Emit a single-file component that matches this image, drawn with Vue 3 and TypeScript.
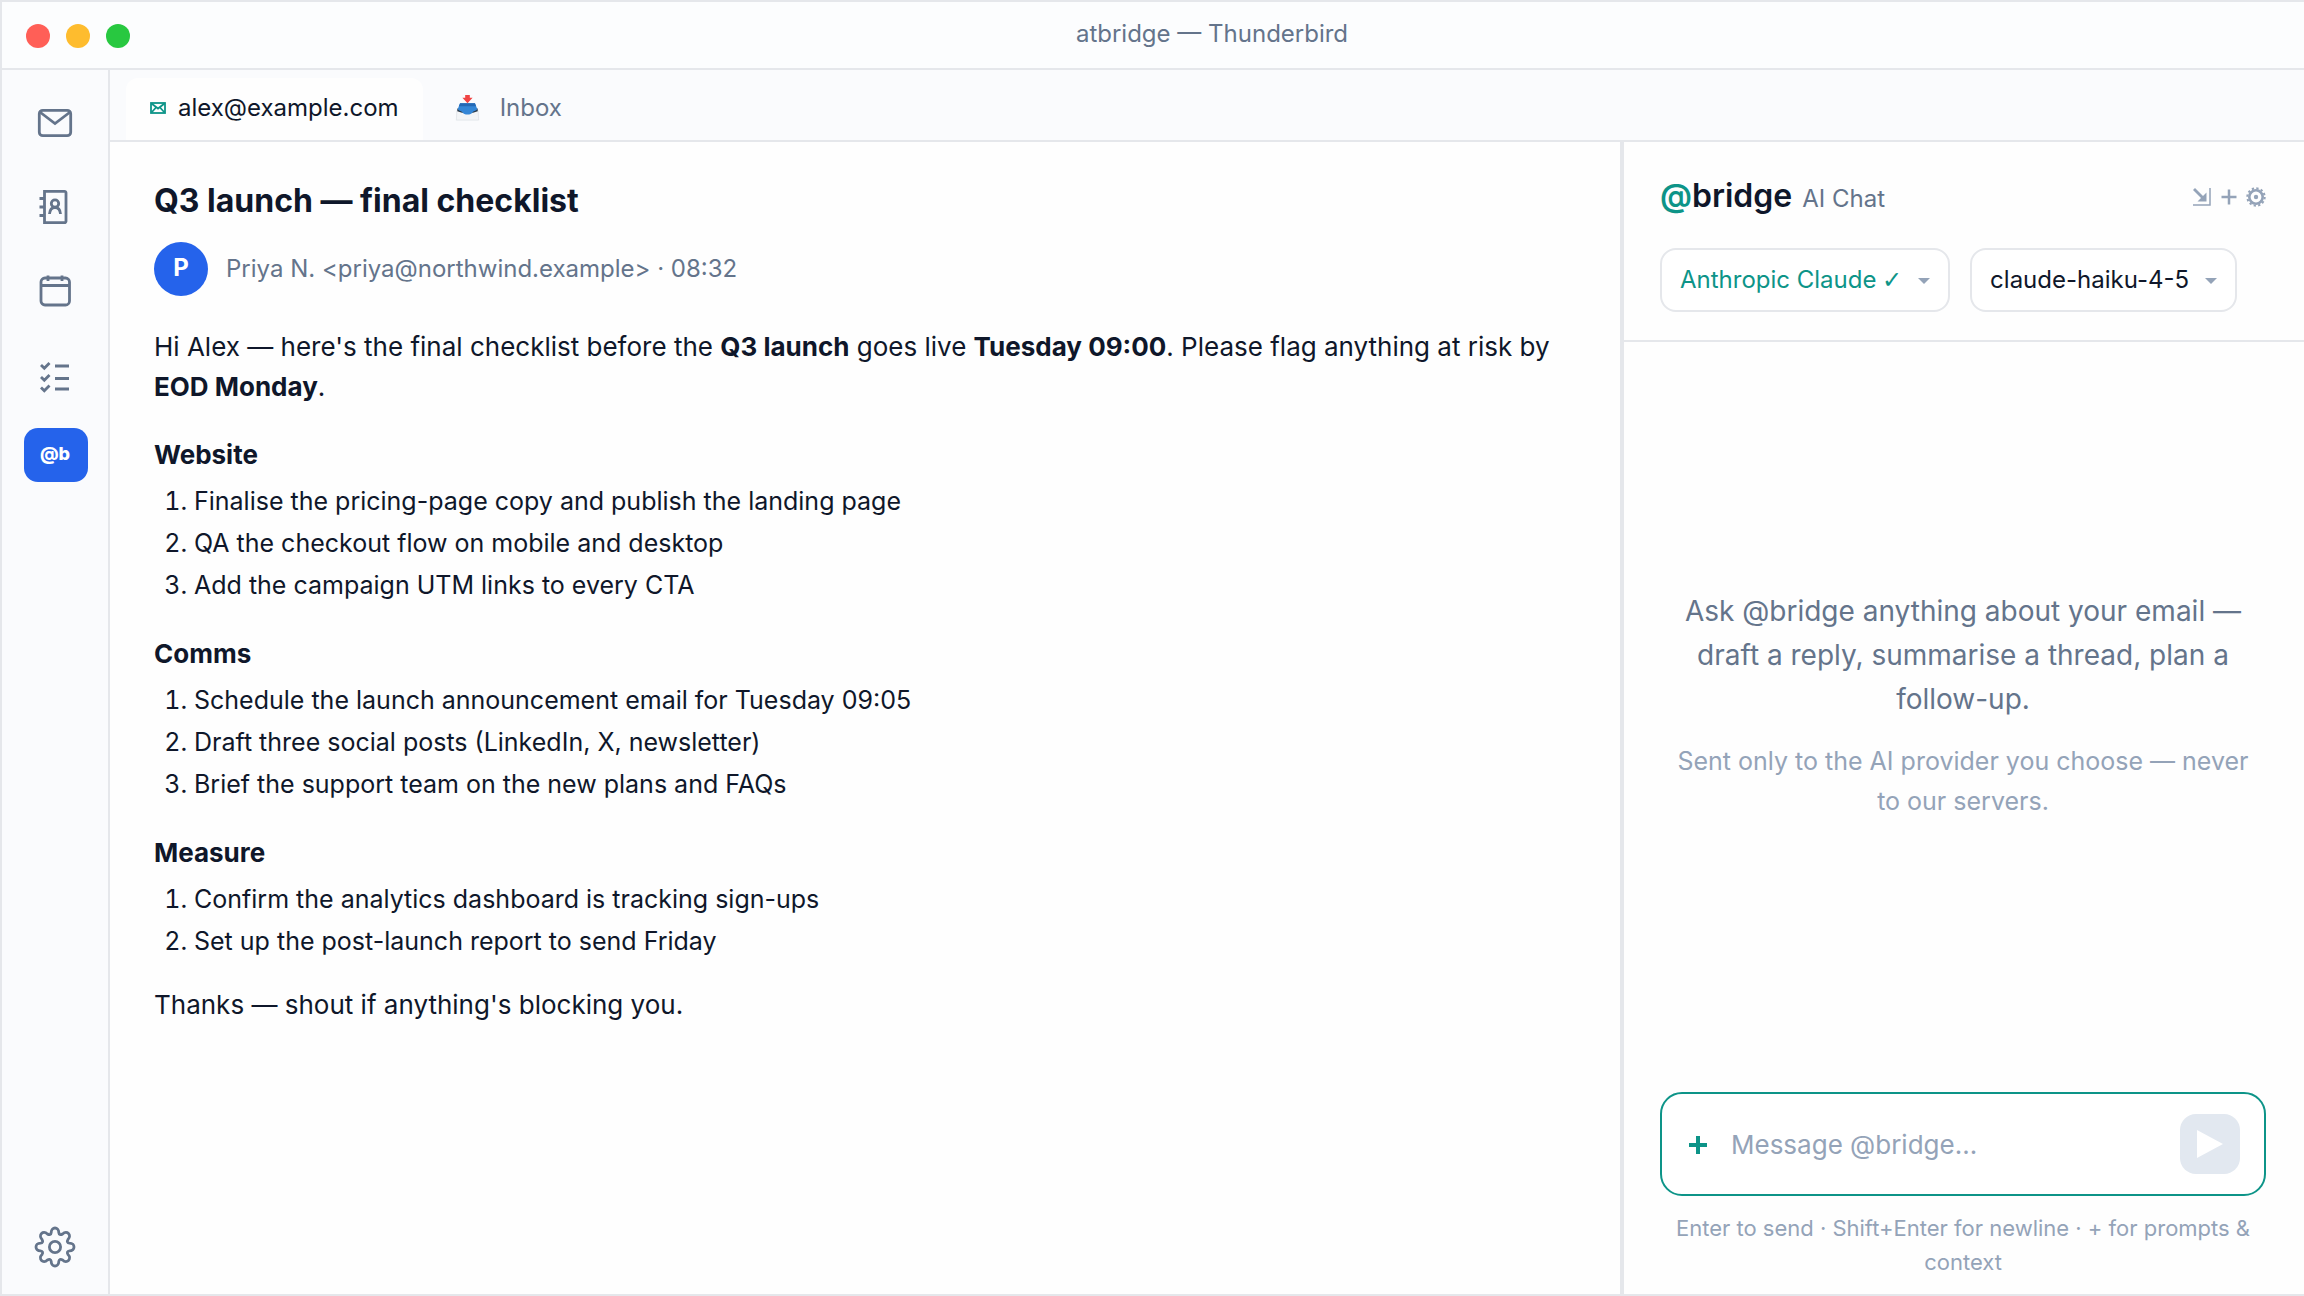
<script setup lang="ts">
import { ref } from 'vue'

interface Section {
  title: string
  items: string[]
}

const sections: Section[] = [
  {
    title: 'Website',
    items: [
      'Finalise the pricing-page copy and publish the landing page',
      'QA the checkout flow on mobile and desktop',
      'Add the campaign UTM links to every CTA',
    ],
  },
  {
    title: 'Comms',
    items: [
      'Schedule the launch announcement email for Tuesday 09:05',
      'Draft three social posts (LinkedIn, X, newsletter)',
      'Brief the support team on the new plans and FAQs',
    ],
  },
  {
    title: 'Measure',
    items: [
      'Confirm the analytics dashboard is tracking sign-ups',
      'Set up the post-launch report to send Friday',
    ],
  },
]

const provider = ref('Anthropic Claude')
const model = ref('claude-haiku-4-5')
const draft = ref('')
</script>

<template>
  <div class="window">
    <header class="titlebar">
      <div class="lights">
        <button class="light close" type="button" aria-label="Close"></button>
        <button class="light minimise" type="button" aria-label="Minimise"></button>
        <button class="light zoom" type="button" aria-label="Zoom"></button>
      </div>
      <div class="window-title">atbridge — Thunderbird</div>
    </header>

    <div class="body">
      <nav class="rail" aria-label="Spaces">
        <button class="space" type="button" aria-label="Mail">
          <svg width="40" height="40" viewBox="0 0 40 40">
            <rect x="4.3" y="7.3" width="31.4" height="25.4" rx="3.5" />
            <path d="M5.5 9.5 20 20.5 34.5 9.5" />
          </svg>
        </button>
        <button class="space" type="button" aria-label="Address book">
          <svg width="40" height="40" viewBox="0 0 40 40">
            <path d="M9.5 4.3H29.5a1.5 1.5 0 0 1 1.5 1.5V34.2a1.5 1.5 0 0 1-1.5 1.5H9.5Z" />
            <path d="M4.5 11.5H9.5M4.5 20H9.5M4.5 28.5H9.5" />
            <circle cx="20" cy="16.5" r="3.7" />
            <path d="M14.5 27c.3-4 2.500-6.500 5.500-6.500s5.200 2.500 5.500 6.500" />
          </svg>
        </button>
        <button class="space" type="button" aria-label="Calendar">
          <svg width="40" height="40" viewBox="0 0 40 40">
            <rect x="6" y="7" width="28.5" height="27" rx="4" />
            <path d="M6 14.5H34.5M13 4.5V10M27 4.5V10" />
          </svg>
        </button>
        <button class="space" type="button" aria-label="Tasks">
          <svg width="40" height="40" viewBox="0 0 40 40">
            <path d="m6 10 3.300 3.300L14.500 8M6 22 9.300 25.300 14.500 20M6 32.500 9.300 35.800 14.500 30.500" />
            <path d="M20 11H34M20 23.500H34M20 34H34" />
          </svg>
        </button>
        <button class="space-active" type="button" aria-label="@bridge">@b</button>
        <button class="space settings" type="button" aria-label="Settings">
          <svg width="48" height="48" viewBox="0 0 48 48">
            <path
              d="M20.200 9.500C20.200 3.500 27.800 3.500 27.800 9.500C28 11.600 29.500 12.300 31.600 11C35.900 6.800 41.200 12.100 37 16.400C35.700 18.500 36.400 20 38.500 20.200C44.500 20.200 44.500 27.800 38.500 27.800C36.400 28 35.700 29.500 37 31.600C41.200 35.900 35.900 41.200 31.600 37C29.500 35.700 28 36.400 27.800 38.500C27.800 44.500 20.200 44.500 20.200 38.500C20 36.400 18.500 35.700 16.400 37C12.100 41.200 6.800 35.900 11 31.600C12.300 29.500 11.600 28 9.500 27.800C3.500 27.800 3.500 20.200 9.500 20.200C11.600 20 12.300 18.500 11 16.400C6.800 12.100 12.100 6.800 16.400 11C18.500 12.300 20 11.600 20.200 9.500Z"
            />
            <circle cx="24" cy="24" r="5.6" />
          </svg>
        </button>
      </nav>

      <div class="workspace">
        <div class="tabs" role="tablist">
          <button class="tab selected" type="button" role="tab" aria-selected="true">
            <svg class="tab-mail" width="16" height="12" viewBox="0 0 16 12">
              <rect x="1" y="1" width="14" height="10" />
              <path d="M1.500 1.500 8 6.500 14.500 1.500M1.500 10.500 6 5.500M14.500 10.500 10 5.500" />
            </svg>
            alex@example.com
          </button>
          <button class="tab" type="button" role="tab" aria-selected="false">
            <svg width="25" height="26" viewBox="0 0 26 28">
              <path d="M1.500 17H24.500L25 27H1Z" fill="#f3f5f7" stroke="#dde1e6" stroke-width=".8" />
              <path d="M2 14.500v3l5 1.500h12l5-1.500v-3Z" fill="#2b3a49" stroke="none" />
              <path d="M5 9H21L23.500 15C23 17 20 16.500 18.500 18.500C17 22 9 22 7.500 18.500C6 16.500 3 17 2.500 15Z" fill="#3486d6" stroke="none" />
              <path d="M5 9H21L22.300 12H3.700Z" fill="#2468b4" stroke="none" />
              <path d="M10.500 0H15.500V3H18.500L13 9 7.500 3H10.500Z" fill="#f04444" stroke="none" />
            </svg>
            Inbox
          </button>
        </div>

        <div class="panes">
          <main class="message">
            <h1>Q3 launch — final checklist</h1>
            <div class="sender">
              <span class="avatar">P</span>
              <span>Priya N. &lt;priya@northwind.example&gt; · 08:32</span>
            </div>
            <p>
              Hi Alex — here's the final checklist before the <strong>Q3 launch</strong> goes live
              <strong>Tuesday 09:00</strong>. Please flag anything at risk by
              <strong>EOD Monday</strong>.
            </p>
            <section v-for="section in sections" :key="section.title">
              <h2>{{ section.title }}</h2>
              <ol>
                <li v-for="item in section.items" :key="item">{{ item }}</li>
              </ol>
            </section>
            <p>Thanks — shout if anything's blocking you.</p>
          </main>

          <aside class="chat">
            <div class="chat-head">
              <div class="brand-row">
                <div class="brand"><span class="at">@</span>bridge</div>
                <div class="brand-sub">AI Chat</div>
                <div class="tools">
                  <button type="button" aria-label="Dock panel">
                    <svg width="20" height="20" viewBox="0 0 20 20">
                      <path d="M18 1V18H1" stroke-width="1.500" />
                      <path d="M2 2 12 12" stroke-width="2.800" />
                      <path d="M14.500 5.500V14.500H5.500L8.500 11.500 11.500 8.500Z" fill="currentColor" stroke="none" />
                    </svg>
                  </button>
                  <button type="button" aria-label="New chat">
                    <svg width="16" height="20" viewBox="0 0 16 20">
                      <path d="M8 2.500V17.500M.5 10H15.500" stroke-width="2.500" />
                    </svg>
                  </button>
                  <button type="button" aria-label="Chat settings">
                    <svg width="20" height="20" viewBox="0 0 20 20">
                      <circle cx="10" cy="10" r="6.700" stroke-width="2.600" />
                      <circle cx="10" cy="10" r="8.700" stroke-width="2" stroke-dasharray="2.280 2.280" />
                      <circle cx="10" cy="10" r="2.200" fill="currentColor" stroke="none" />
                    </svg>
                  </button>
                </div>
              </div>
              <div class="pickers">
                <label class="picker provider">
                  <select v-model="provider" aria-label="AI provider">
                    <option>Anthropic Claude</option>
                  </select>
                  <span class="check">✓</span>
                  <svg class="caret" width="12" height="6" viewBox="0 0 12 6"><path d="M0 0H12L6 6Z" /></svg>
                </label>
                <label class="picker">
                  <select v-model="model" aria-label="Model">
                    <option>claude-haiku-4-5</option>
                  </select>
                  <svg class="caret" width="12" height="6" viewBox="0 0 12 6"><path d="M0 0H12L6 6Z" /></svg>
                </label>
              </div>
            </div>

            <div class="empty">
              <p class="lead">
                Ask @bridge anything about your email — draft a reply, summarise a thread, plan a follow-up.
              </p>
              <p class="note">Sent only to the AI provider you choose — never to our servers.</p>
            </div>

            <form class="composer-area" @submit.prevent>
              <div class="composer">
                <button class="add" type="button" aria-label="Prompts and context">
                  <svg width="18" height="18" viewBox="0 0 18 18"><path d="M9 0V18M0 9H18" /></svg>
                </button>
                <input v-model="draft" type="text" placeholder="Message @bridge..." aria-label="Message @bridge" />
                <button class="send" type="submit" aria-label="Send">
                  <svg width="26" height="28" viewBox="0 0 26 28"><path d="M0 0 26 14 0 28Z" /></svg>
                </button>
              </div>
              <p class="hint">Enter to send · Shift+Enter for newline · + for prompts &amp; context</p>
            </form>
          </aside>
        </div>
      </div>
    </div>
  </div>
</template>

<style>
body {
  margin: 0;
}
</style>

<style scoped>
* {
  box-sizing: border-box;
}

.window {
  display: flex;
  flex-direction: column;
  min-height: 100vh;
  border: 2px solid #e5e7eb;
  border-right: 0;
  background: #fefefe;
  color: #0f172a;
  font-family: Inter, "Liberation Sans", sans-serif;
  font-size: 26px;
  line-height: 40px;
}

button,
input,
select {
  font: inherit;
  color: inherit;
}

button {
  padding: 0;
  border: 0;
  background: none;
}

svg {
  display: block;
  fill: none;
  stroke: currentColor;
}

h1,
h2,
p,
ol {
  margin: 0;
}

.titlebar {
  display: flex;
  align-items: center;
  gap: 16px;
  height: 68px;
  padding: 0 26px 0 24px;
  border-bottom: 2px solid #e5e7eb;
  background: #fcfdfe;
}

.lights {
  display: flex;
  gap: 16px;
}

.light {
  width: 24px;
  height: 24px;
  margin-top: 2px;
  border-radius: 50%;
}

.close {
  background: #ff5f57;
}

.minimise {
  background: #febc2e;
}

.zoom {
  background: #28c840;
}

.window-title {
  flex: 1;
  padding-bottom: 2px;
  color: #64748b;
  font-size: 24px;
  text-align: center;
}

.body {
  display: flex;
  flex: 1;
}

.rail {
  display: flex;
  flex-direction: column;
  align-items: center;
  width: 108px;
  padding: 11px 0 5px 2px;
  border-right: 2px solid #e5e7eb;
  background: #fafbfd;
}

.space {
  display: flex;
  align-items: center;
  justify-content: center;
  width: 64px;
  height: 84px;
  padding-right: 2px;
  color: #64748b;
  stroke-width: 2.8;
}

.space-active {
  width: 64px;
  height: 54px;
  margin-top: 11px;
  padding: 0 2px 2px 0;
  border-radius: 14px;
  background: #2563eb;
  color: #fff;
  font-size: 18px;
  font-weight: 800;
}

.settings {
  margin-top: auto;
}

.workspace {
  display: flex;
  flex: 1;
  flex-direction: column;
  min-width: 0;
}

.tabs {
  display: flex;
  height: 72px;
  padding: 8px 16px 0;
  border-bottom: 2px solid #e5e7eb;
  background: #fafbfd;
}

.tab {
  display: flex;
  align-items: center;
  padding: 0 24px 2px;
  gap: 12px;
  color: #64748b;
  font-size: 24px;
}

.tab + .tab {
  padding-left: 32px;
  gap: 20px;
}

.selected {
  border-radius: 12px 12px 0 0;
  background: #fefefe;
  color: #0f172a;
}

.tab-mail {
  color: #0d9488;
  stroke-width: 1.8;
}

.panes {
  display: flex;
  flex: 1;
}

.message {
  flex: 1;
  padding: 37px 44px;
}

.message h1 {
  font-size: 32px;
  font-weight: 700;
  line-height: 44px;
}

.sender {
  display: flex;
  align-items: center;
  gap: 18px;
  margin: 19px 0 31px;
  color: #64748b;
  font-size: 24px;
}

.avatar {
  width: 54px;
  height: 54px;
  border-radius: 50%;
  background: #2563eb;
  color: #fff;
  font-weight: 700;
  line-height: 52px;
  text-align: center;
}

.message h2 {
  margin-top: 28px;
  font-size: 26px;
  font-weight: 700;
  line-height: 40px;
}

.message ol {
  margin: 5px 0 23px;
  padding-left: 40px;
  font-size: 25px;
  line-height: 42px;
}

.chat {
  display: flex;
  flex-direction: column;
  width: 684px;
  padding-right: 2px;
  border-left: 4px solid #e5e7eb;
}

.chat-head {
  margin-right: -2px;
  padding: 34px 38px 28px 36px;
  border-bottom: 2px solid #e5e7eb;
}

.brand-row {
  display: flex;
  align-items: baseline;
  height: 44px;
}

.brand {
  font-size: 32px;
  font-weight: 600;
}

.at {
  color: #0d9488;
}

.brand-sub {
  margin-left: 10px;
  color: #64748b;
  font-size: 24px;
}

.tools {
  display: flex;
  gap: 9px;
  margin-left: auto;
  color: #94a3b8;
}

.pickers {
  display: flex;
  gap: 20px;
  margin-top: 28px;
}

.picker {
  display: flex;
  align-items: center;
  height: 64px;
  padding: 0 18px;
  border: 2px solid #e5e7eb;
  border-radius: 16px;
  background: #fff;
  font-size: 24px;
}

.picker select {
  height: 60px;
  padding: 0;
  border: 0;
  outline: 0;
  background: none;
  appearance: none;
}

.provider {
  color: #0d9488;
}

.check {
  margin-left: 5px;
  font-family: "DejaVu Sans", sans-serif;
}

.caret {
  margin: 2px 0 0 16px;
  fill: #94a3b8;
  stroke: none;
}

.empty {
  display: flex;
  flex: 1;
  flex-direction: column;
  justify-content: center;
  padding: 0 52px 24px;
  text-align: center;
}

.lead {
  color: #64748b;
  font-size: 28px;
  line-height: 44px;
}

.note {
  margin-top: 20px;
  color: #94a3b8;
  font-size: 25px;
  line-height: 40px;
}

.composer-area {
  padding: 0 36px 15px;
}

.composer {
  display: flex;
  align-items: center;
  height: 104px;
  padding: 0 24px;
  border: 2px solid #0d9488;
  border-radius: 22px;
  background: #fff;
}

.add {
  padding: 2px 4px 0 3px;
  color: #0d9488;
  stroke-width: 4;
}

.composer input {
  flex: 1;
  min-width: 0;
  margin: 0 20px;
  padding: 2px 0 0;
  border: 0;
  outline: 0;
  background: none;
  font-size: 26px;
}

.composer input::placeholder {
  color: #94a3b8;
}

.send {
  display: flex;
  align-items: center;
  justify-content: center;
  width: 60px;
  height: 60px;
  border-radius: 16px;
  background: #e2e8f0;
}

.send svg {
  fill: #fff;
  stroke: none;
}

.hint {
  margin-top: 15px;
  color: #94a3b8;
  font-size: 22px;
  line-height: 34px;
  text-align: center;
}
</style>
